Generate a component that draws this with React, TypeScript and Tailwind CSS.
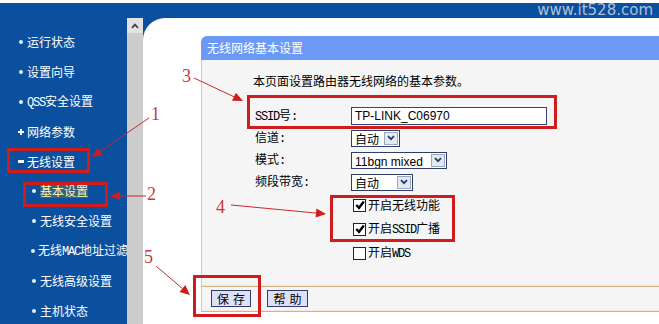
import React from "react";

const RED = "#d01c1c";
const LINE = "#c8282c";

function Mono({ children }: { children: React.ReactNode }) {
  return <span className="font-['Liberation_Mono',monospace] text-[12px] tracking-[-1.2px]">{children}</span>;
}

type NavProps = { kind: "dot" | "plus" | "minus"; sub?: boolean; active?: boolean; children: React.ReactNode };

function NavItem({ kind, sub, active, children }: NavProps) {
  return (
    <div className={`h-[29.8px] flex items-center whitespace-nowrap ${sub ? "pl-[31px]" : "pl-[18px]"}`}>
      <div className="w-[6px] h-[6px] flex items-center justify-center">
        {kind === "dot" && <div className="w-[4px] h-[4px] rounded-full bg-[#e6f2ef]" />}
        {kind === "plus" && (
          <div className="relative w-[6px] h-[6px]">
            <div className="absolute left-0 top-[2px] w-[6px] h-[2px] bg-[#eef6f2]" />
            <div className="absolute left-[2px] top-0 w-[2px] h-[6px] bg-[#eef6f2]" />
          </div>
        )}
        {kind === "minus" && <div className="w-[6px] h-[3px] bg-[#eef6f2]" />}
      </div>
      <span
        className={`ml-[3px] text-[12px] leading-[14px] ${
          active ? "text-[#f6f6ae] bg-[#3f5f7c]" : "text-white"
        }`}
      >
        {children}
      </span>
    </div>
  );
}

function Chevron() {
  return (
    <svg width="8" height="6" viewBox="0 0 8 6">
      <path d="M1 1.2 L4 4.2 L7 1.2" fill="none" stroke="#243a78" strokeWidth="1.8" />
    </svg>
  );
}

function Select({ widthClass, text }: { widthClass: string; text: React.ReactNode }) {
  return (
    <div className={`${widthClass} h-[17px] border border-[#2f3e66] bg-white flex items-stretch`}>
      <div className="flex-1 pl-[3px] text-[12px] leading-[15px] text-black whitespace-nowrap overflow-hidden">{text}</div>
      <div className="w-[14px] m-[1px] border border-[#9aa8c0] bg-[#e4e8f0] flex items-center justify-center">
        <Chevron />
      </div>
    </div>
  );
}

function Checkbox({ checked, children }: { checked: boolean; children: React.ReactNode }) {
  return (
    <div className="h-[24px] flex items-center">
      <div className="w-[13px] h-[13px] border border-[#222] bg-white flex items-center justify-center">
        {checked && (
          <svg width="10" height="10" viewBox="0 0 10 10">
            <path d="M1.3 5 L4 7.8 L8.8 1.6" fill="none" stroke="#000" strokeWidth="2.4" />
          </svg>
        )}
      </div>
      <span className="ml-[2px] text-[12px] leading-[14px] text-black whitespace-nowrap">{children}</span>
    </div>
  );
}

function Arrow({ x1, y1, x2, y2 }: { x1: number; y1: number; x2: number; y2: number }) {
  const dx = x2 - x1;
  const dy = y2 - y1;
  const len = Math.hypot(dx, dy);
  const ux = dx / len;
  const uy = dy / len;
  const L = 10;
  const W = 4.5;
  const bx = x2 - ux * L;
  const by = y2 - uy * L;
  const pts = `${x2},${y2} ${bx - uy * W},${by + ux * W} ${bx + uy * W},${by - ux * W}`;
  return (
    <g>
      <line x1={x1} y1={y1} x2={bx} y2={by} stroke={LINE} strokeWidth="1" />
      <polygon points={pts} fill={RED} />
    </g>
  );
}

function Box({ l, t, r, b }: { l: number; t: number; r: number; b: number }) {
  return <rect x={l + 1.5} y={t + 1.5} width={r - l - 3} height={b - t - 3} fill="none" stroke={RED} strokeWidth="3" />;
}

function Num({ x, y, n }: { x: number; y: number; n: string }) {
  return (
    <text x={x} y={y} fill="#c8383a" fontSize="18" fontFamily="'Liberation Serif', serif">
      {n}
    </text>
  );
}

export default function App() {
  return (
    <div className="relative w-[659px] h-[324px] overflow-hidden bg-white font-['Noto_Sans_CJK_SC','Noto_Sans',sans-serif]">
      <div className="h-[3px] bg-white" />
      <div className="flex h-[321px]">
        {/* Sidebar */}
        <div className="w-[127px] shrink-0 bg-[#0b4f9f] overflow-hidden pt-[24.6px]">
          <NavItem kind="dot">运行状态</NavItem>
          <NavItem kind="dot">设置向导</NavItem>
          <NavItem kind="dot">
            <Mono>QSS</Mono>安全设置
          </NavItem>
          <NavItem kind="plus">网络参数</NavItem>
          <NavItem kind="minus">无线设置</NavItem>
          <NavItem kind="dot" sub active>
            基本设置
          </NavItem>
          <NavItem kind="dot" sub>
            无线安全设置
          </NavItem>
          <NavItem kind="dot" sub>
            无线<Mono>MAC</Mono>地址过滤
          </NavItem>
          <NavItem kind="dot" sub>
            无线高级设置
          </NavItem>
          <NavItem kind="dot" sub>
            主机状态
          </NavItem>
        </div>

        {/* Right column */}
        <div className="flex-1 flex flex-col bg-[#0b4f9f]">
          <div className="h-[15px] flex items-center justify-end pr-[6px]">
            <span className="font-['DejaVu_Sans',sans-serif] text-[15px] leading-[15px] text-[#aebfd6]">www.it528.com</span>
          </div>
          <div className="flex-1 flex">
            {/* Scrollbar */}
            <div className="w-[16px] shrink-0 bg-[#cdcdcd] flex flex-col">
              <div className="h-[15px] bg-[#e2e2e2] flex items-center justify-center">
                <svg width="8" height="6" viewBox="0 0 8 6">
                  <path d="M1 4.8 L4 1.6 L7 4.8" fill="none" stroke="#444" strokeWidth="1.8" />
                </svg>
              </div>
            </div>
            {/* Content */}
            <div className="flex-1 bg-white rounded-tl-[22px] pt-[18px] pl-[58px]">
              <div className="flex flex-col">
                <div className="h-[24px] bg-[#6a9af5] rounded-tl-[6px] flex items-center pl-[6px]">
                  <span className="text-white text-[12px] leading-[14px]">无线网络基本设置</span>
                </div>
                <div className="h-[225px] border-l border-[#ecc690] bg-[#f5f5f5] pt-[10px] pl-[51px] text-black">
                  <div className="h-[22px] flex items-center text-[12px] leading-[14px]">本页面设置路由器无线网络的基本参数。</div>
                  <div className="mt-[13px] pl-[2px]">
                    <div className="h-[22px] flex items-center">
                      <div className="w-[96px] text-[12px] leading-[14px]">
                        <Mono>SSID</Mono>号<Mono>:</Mono>
                      </div>
                      <div className="w-[196px] h-[18px] border border-[#36456b] bg-white pl-[3px] flex items-center font-['Liberation_Sans',sans-serif] text-[12px] leading-[14px]">
                        TP-LINK_C06970
                      </div>
                    </div>
                    <div className="h-[22px] flex items-center">
                      <div className="w-[96px] text-[12px] leading-[14px]">
                        信道<Mono>:</Mono>
                      </div>
                      <Select widthClass="w-[49px]" text="自动" />
                    </div>
                    <div className="h-[22px] flex items-center">
                      <div className="w-[96px] text-[12px] leading-[14px]">
                        模式<Mono>:</Mono>
                      </div>
                      <Select
                        widthClass="w-[96px]"
                        text={<span className="font-['Liberation_Sans',sans-serif]">11bgn mixed</span>}
                      />
                    </div>
                    <div className="h-[22px] flex items-center">
                      <div className="w-[96px] text-[12px] leading-[14px]">
                        频段带宽<Mono>:</Mono>
                      </div>
                      <Select widthClass="w-[62px]" text="自动" />
                    </div>
                    <div className="pl-[98px]">
                      <Checkbox checked>开启无线功能</Checkbox>
                      <Checkbox checked>
                        开启<Mono>SSID</Mono>广播
                      </Checkbox>
                      <Checkbox checked={false}>
                        开启<Mono>WDS</Mono>
                      </Checkbox>
                    </div>
                  </div>
                </div>
                <div className="h-[1px] bg-[#fae6d8]" />
                <div className="h-[1px] bg-[#d6b47e]" />
                <div className="h-[23px] border-l border-[#ecc690] bg-[#f5f5f5] flex items-center pl-[9px] gap-[16px]">
                  <div className="w-[40px] h-[17px] border border-[#2e3a6a] bg-[#dce0f8] flex items-center justify-center text-[12px] leading-[14px] tracking-[4px] pl-[4px]">
                    保存
                  </div>
                  <div className="w-[41px] h-[17px] border border-[#2e3a6a] bg-[#dce0f8] flex items-center justify-center text-[12px] leading-[14px] tracking-[4px] pl-[4px]">
                    帮助
                  </div>
                </div>
                <div className="h-[1px] bg-[#fae6d8]" />
                <div className="h-[1px] bg-[#d6b47e]" />
              </div>
            </div>
          </div>
        </div>
      </div>

      {/* Annotation overlay */}
      <svg className="absolute left-0 top-0 pointer-events-none" width="659" height="324" viewBox="0 0 659 324">
        <Box l={7} t={148} r={90} b={173} />
        <Box l={23} t={182} r={108} b={207} />
        <Box l={247} t={95} r={557} b={129} />
        <Box l={330} t={195} r={455} b={242} />
        <Box l={193} t={275} r={261} b={317} />
        <Arrow x1={149} y1={118} x2={92} y2={157} />
        <Arrow x1={146} y1={196} x2={110} y2={196} />
        <Arrow x1={194} y1={78} x2={243} y2={101} />
        <Arrow x1={231} y1={205} x2={326} y2={214} />
        <Arrow x1={156} y1={266} x2={190} y2={295} />
        <Num x={151} y={120} n="1" />
        <Num x={147} y={200} n="2" />
        <Num x={182} y={82} n="3" />
        <Num x={216} y={213} n="4" />
        <Num x={144} y={263} n="5" />
      </svg>
    </div>
  );
}
